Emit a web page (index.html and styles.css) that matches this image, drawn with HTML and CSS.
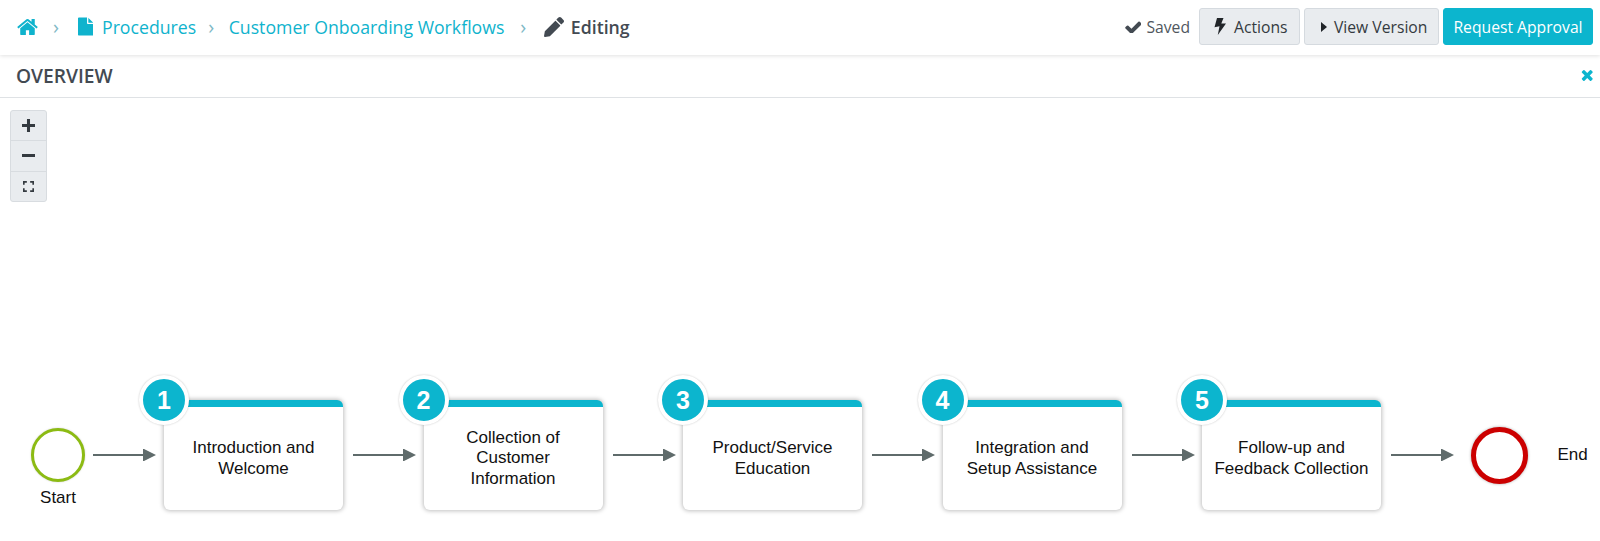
FILE: index.html
```html
<!DOCTYPE html>
<html lang="en">
<head>
<meta charset="utf-8">
<title>Customer Onboarding Workflows</title>
<link rel="stylesheet" href="styles.css">
</head>
<body>
<svg class="defs" width="0" height="0" aria-hidden="true">
  <defs>
    <g id="arrow"><rect x="0" y="5" width="52" height="2" fill="#5f6b6b"/><polygon points="50,-.5 63,6 50,12.500" fill="#5f6b6b"/></g>
  </defs>
</svg>
<header class="topbar">
  <nav class="crumbs">
    <svg class="i-home" viewBox="0 0 1664 1408"><path d="M1408 800v480q0 26-19 45t-45 19h-384v-384h-256v384h-384q-26 0-45-19t-19-45v-480q0-1 .5-3t.5-3l575-474 575 474q1 2 1 6zm223-69l-62 74q-8 9-21 11h-3q-13 0-21-7l-692-577-692 577q-12 8-24 7-13-2-21-11l-62-74q-8-10-7-23.500t11-21.500l719-599q32-26 76-26t76 26l244 204v-195q0-14 9-23t23-9h192q14 0 23 9t9 23v408l219 182q10 8 11 21.500t-7 23.500z"/></svg>
    <span class="sep sep-a">›</span>
    <svg class="i-file" viewBox="128 0 1536 1792"><path d="M1152 512v-472q22 14 36 28l408 408q14 14 28 36h-472zm-128 32q0 40 28 68t68 28h544v1056q0 40-28 68t-68 28h-1344q-40 0-68-28t-28-68v-1600q0-40 28-68t68-28h800v544z"/></svg>
    <a class="crumb crumb-a">Procedures</a>
    <span class="sep sep-b">›</span>
    <a class="crumb">Customer Onboarding Workflows</a>
    <span class="sep sep-c">›</span>
    <svg class="i-pencil" viewBox="0 0 512 512"><path d="M497.900 142.100l-46.100 46.100c-4.700 4.700-12.300 4.700-17 0l-111-111c-4.700-4.700-4.700-12.300 0-17l46.100-46.100c18.700-18.700 49.100-18.700 67.900 0l60.100 60.100c18.800 18.700 18.800 49.100 0 67.900zM284.200 99.800L21.600 362.400.4 483.900c-2.900 16.400 11.400 30.600 27.800 27.800l121.500-21.300 262.600-262.600c4.700-4.700 4.700-12.300 0-17l-111-111c-4.800-4.700-12.400-4.700-17.100 0z"/></svg>
    <span class="current">Editing</span>
  </nav>
  <div class="actions">
    <svg class="i-check" viewBox="100 300 1571 1100"><path d="M1671 566q0 40-28 68l-724 724-136 136q-28 28-68 28t-68-28l-136-136-362-362q-28-28-28-68t28-68l136-136q28-28 68-28t68 28l294 295 656-657q28-28 68-28t68 28l136 136q28 28 28 68z"/></svg>
    <span class="saved">Saved</span>
    <button class="btn btn-actions"><svg class="i-bolt" viewBox="0 0 12 17"><path d="M3 0h6.500L7.300 5.500H12L3.800 17l1.700-8.800L0.500 9.300z"/></svg>Actions</button>
    <button class="btn btn-view"><span class="caret"></span>View Version</button>
    <button class="btn btn-primary">Request Approval</button>
  </div>
</header>
<section class="overview">
  <h2>OVERVIEW</h2>
  <svg class="i-close" viewBox="250 250 1240 1304"><path d="M1490 1322q0 40-28 68l-136 136q-28 28-68 28t-68-28l-294-294-294 294q-28 28-68 28t-68-28l-136-136q-28-28-28-68t28-68l294-294-294-294q-28-28-28-68t28-68l136-136q28-28 68-28t68 28l294 294 294-294q28-28 68-28t68 28l136 136q28 28 28 68t-28 68l-294 294 294 294q28 28 28 68z"/></svg>
</section>
<main class="canvas">
  <div class="zoom">
    <div class="zoom-btn"><svg width="13" height="13" viewBox="0 0 12 12"><path d="M0 4.600h12v2.800H0zM4.600 0h2.800v12H4.600z"/></svg></div>
    <div class="zoom-btn"><svg width="13" height="13" viewBox="0 0 12 12"><path d="M0 4.600h12v2.800H0z"/></svg></div>
    <div class="zoom-btn"><svg width="11" height="11" viewBox="0 0 10 10"><path d="M0 0h3.500v1.500H1.500v2H0zM6.500 0H10v3.500H8.500v-2h-2zM0 6.500h1.500v2h2V10H0zM8.500 6.500H10V10H6.500V8.500h2z"/></svg></div>
  </div>
  <div class="flow">
    <div class="start"><div class="ring-start"></div><span class="start-label">Start</span></div>
    <svg class="arrow arrow-first" viewBox="0 0 63 12"><use href="#arrow"/></svg>
    <div class="card"><span class="badge">1</span><p>Introduction and<br>Welcome</p></div>
    <svg class="arrow" viewBox="0 0 63 12"><use href="#arrow"/></svg>
    <div class="card"><span class="badge">2</span><p>Collection of<br>Customer<br>Information</p></div>
    <svg class="arrow" viewBox="0 0 63 12"><use href="#arrow"/></svg>
    <div class="card"><span class="badge">3</span><p>Product/Service<br>Education</p></div>
    <svg class="arrow" viewBox="0 0 63 12"><use href="#arrow"/></svg>
    <div class="card"><span class="badge">4</span><p>Integration and<br>Setup Assistance</p></div>
    <svg class="arrow" viewBox="0 0 63 12"><use href="#arrow"/></svg>
    <div class="card"><span class="badge">5</span><p>Follow-up and<br>Feedback Collection</p></div>
    <svg class="arrow" viewBox="0 0 63 12"><use href="#arrow"/></svg>
    <div class="ring-end"></div>
    <span class="end-label">End</span>
  </div>
</main>
</body>
</html>
```
FILE: styles.css
```css
* { box-sizing: border-box; }
html, body { margin: 0; padding: 0; height: 541px; overflow: hidden; background: #fff; }
body { font-family: "Open Sans", "Liberation Sans", sans-serif; color: #434a52; }
.defs { position: absolute; }

.topbar {
  height: 55px;
  display: flex;
  align-items: center;
  justify-content: space-between;
  padding: 0 7px 2px 17px;
  box-shadow: 0 1px 4px rgba(0, 0, 0, .12);
  position: relative;
}
.crumbs { display: flex; align-items: center; font-size: 17.700px; color: #0fb3cd; }
.crumbs svg { fill: currentColor; display: block; flex: none; }
.i-home { width: 21px; height: 18px; }
.i-file { width: 15.500px; height: 19px; margin-right: 9px; }
.i-pencil { width: 20px; height: 20px; color: #434a52; margin-right: 6.500px; }
.sep { color: #7fb9c6; font-size: 20px; line-height: 1; width: 12px; text-align: center; }
.sep-a { margin: 0 15.500px 0 12px; }
.sep-b { margin: 0 11.500px 0 8px; }
.sep-c { margin: 0 15px 0 13px; }
.crumb-a { margin-right: 1px; }
.current { color: #434a52; font-weight: 600; }

.actions { display: flex; align-items: center; font-size: 15.700px; }
.i-check { width: 16.500px; height: 12px; fill: #434a52; margin-right: 5px; }
.saved { margin-right: 9px; color: #50575e; }
.btn {
  font: inherit;
  height: 37px;
  padding: 0;
  margin-left: 4px;
  border-radius: 3px;
  border: 1px solid #d5dadf;
  background: #e9ecef;
  color: #343a40;
  display: flex;
  align-items: center;
}
.saved + .btn { margin-left: 0; }
.btn-actions { width: 101px; padding-left: 14px; }
.btn-view { width: 135px; padding-left: 16px; }
.btn-primary { width: 150px; justify-content: center; background: #0cb5ce; border-color: #0cb5ce; color: #fff; }
.i-bolt { width: 12px; height: 17px; fill: #212529; margin-right: 8px; flex: none; }
.caret {
  width: 0; height: 0;
  border-left: 6px solid #212529;
  border-top: 5px solid transparent;
  border-bottom: 5px solid transparent;
  margin-right: 7px;
}

.overview {
  height: 43px;
  display: flex;
  align-items: center;
  justify-content: space-between;
  padding: 0 7px 2px 16px;
  border-bottom: 1px solid #dfe2e5;
}
.overview h2 { margin: 0; font-size: 19.200px; font-weight: 600; color: #434a52; }
.i-close { width: 12px; height: 12px; fill: #0cb5ce; }

.canvas { padding: 12px 0 0 10px; }
.zoom {
  width: 37px;
  height: 92px;
  border: 1px solid #d8dce0;
  border-radius: 3px;
  background: #e9ecef;
  display: flex;
  flex-direction: column;
}
.zoom-btn { flex: 1; display: flex; align-items: center; justify-content: center; border-bottom: 1px solid #d8dce0; }
.zoom-btn:last-child { border-bottom: 0; }
.zoom-btn svg { fill: #343a40; display: block; }

.flow {
  margin: 198px 0 0 21px;
  height: 110px;
  display: flex;
  align-items: center;
  font-family: "Liberation Sans", Arial, sans-serif;
  font-size: 17px;
  color: #111;
}
.start { position: relative; width: 54px; height: 54px; flex: none; margin-right: 8px; }
.ring-start { width: 54px; height: 54px; border-radius: 50%; border: 3px solid #8cbb13; background: #fff; box-shadow: 0 0 2px rgba(0, 0, 0, .2); }
.start-label { position: absolute; left: -10px; right: -10px; top: 60px; text-align: center; }
.arrow { width: 63px; height: 12px; flex: none; margin: 0 7.500px 0 10px; }
.arrow-first { margin: 0 8px 0 0; }
.card {
  position: relative;
  width: 179px;
  height: 110px;
  flex: none;
  border-top: 7px solid #0cb5ce;
  border-radius: 6px;
  background: #fff;
  box-shadow: 0 0 4px 1px rgba(0, 0, 0, .25);
  display: flex;
  align-items: center;
  justify-content: center;
  text-align: center;
}
.card p { margin: 0; line-height: 20.500px; }
.badge {
  position: absolute;
  left: -25px;
  top: -32px;
  width: 50px;
  height: 50px;
  border-radius: 50%;
  background: #0cb5ce;
  border: 4px solid #fff;
  box-shadow: 0 0 2px rgba(0, 0, 0, .25);
  color: #fff;
  font-size: 25px;
  font-weight: 700;
  display: flex;
  align-items: center;
  justify-content: center;
}
.ring-end { width: 57px; height: 57px; flex: none; margin-left: 9px; border-radius: 50%; border: 5px solid #cc0000; background: #fff; box-shadow: 0 0 3px rgba(0, 0, 0, .35); }
.end-label { margin-left: 30px; }
```
